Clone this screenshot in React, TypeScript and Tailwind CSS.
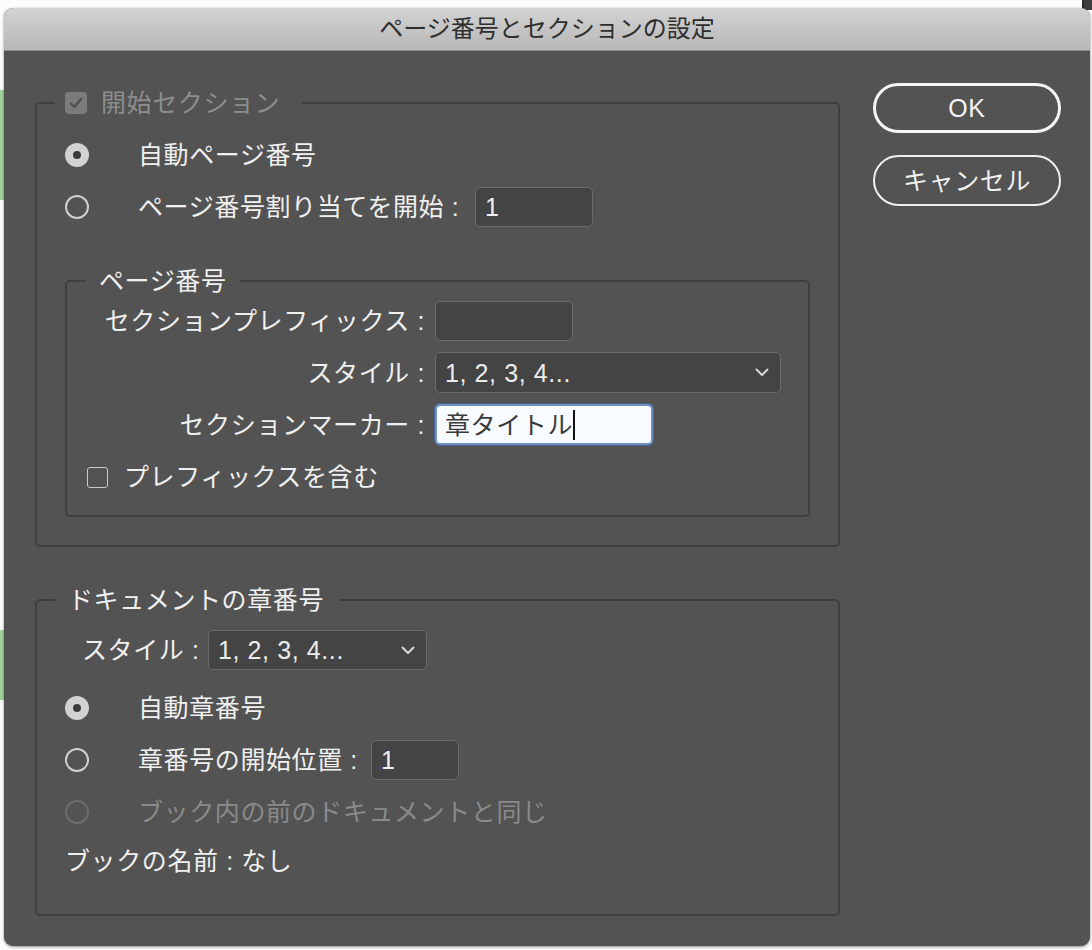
import React from "react";

const font = "font-['Liberation_Sans','Noto_Sans_CJK_JP',sans-serif]";

function Radio({ checked, disabled }: { checked?: boolean; disabled?: boolean }) {
	if (checked) {
		return (
			<span className="flex size-[24px] shrink-0 items-center justify-center rounded-full bg-[#d2d2d2]">
				<span className="size-[8px] rounded-full bg-[#3b3b3b]" />
			</span>
		);
	}
	return (
		<span
			className={
				disabled
					? "size-[24px] shrink-0 rounded-full border-2 border-[#6c6c6c]"
					: "size-[24px] shrink-0 rounded-full border-2 border-[#cfcfcf]"
			}
		/>
	);
}

function Chevron() {
	return (
		<svg width="14" height="9" viewBox="0 0 14 9" className="shrink-0">
			<polyline points="1.5,1.5 7,7 12.5,1.5" fill="none" stroke="#dcdcdc" strokeWidth="1.8" strokeLinecap="round" strokeLinejoin="round" />
		</svg>
	);
}

function Select({ className }: { className: string }) {
	return (
		<div className={"flex items-center justify-between rounded-[5px] border-[1.5px] border-[#6b6b6b] bg-[#444444] pl-[9px] pr-[11px] text-[#ececec] " + className}>
			<span>1, 2, 3, 4...</span>
			<Chevron />
		</div>
	);
}

export default function App() {
	return (
		<div className={"relative h-[950px] w-[1092px] overflow-hidden bg-[#fbfdfb] " + font}>
			{/* canvas behind the dialog */}
			<div className="absolute right-0 top-0 h-[10px] w-[10px] border-l-2 border-[#2a2a2a] bg-[#3d3d3d]" />
			<div className="absolute left-0 top-[90px] h-[110px] w-[4px] bg-[#9fd39a]" />
			<div className="absolute left-0 top-[630px] h-[70px] w-[4px] bg-[#9fd39a]" />

			<div className="relative ml-[4px] mt-[8px] flex h-[938px] w-[1086px] flex-col overflow-hidden rounded-[9px] bg-[#535353] shadow-[0_1px_3px_rgba(0,0,0,0.45)]">
				{/* title bar */}
				<div className="flex h-[43px] shrink-0 items-center justify-center border-b border-[#8f8f8f] bg-gradient-to-b from-[#d3d3d3] to-[#b7b7b7] text-[24px] text-[#2e2e2e]">
					ページ番号とセクションの設定
				</div>

				<div className="flex pl-[31px] pt-[32px] text-[25px] leading-[30px] tracking-[0.6px] text-[#f0f0f0]">
					{/* left column */}
					<div className="mt-[5px] flex w-[805px] flex-col gap-[38px]">
						<fieldset className="rounded-[5px] border-2 border-[#3f3f3f]">
							<legend className="ml-[18px] pl-[10px] pr-[22px]">
								<div className="flex h-[30px] items-center gap-[14px] text-[#8d8d8d]">
									<span className="flex size-[22px] items-center justify-center rounded-[4px] bg-[#7b7b7b]">
										<svg width="14" height="12" viewBox="0 0 14 12">
											<polyline points="2,6.5 5.5,10 12,2" fill="none" stroke="#4f4f4f" strokeWidth="2.4" strokeLinecap="round" strokeLinejoin="round" />
										</svg>
									</span>
									<span>開始セクション</span>
								</div>
							</legend>

							<div className="px-[28px] pb-[28px] pt-[17px]">
								<div className="flex h-[40px] items-center">
									<Radio checked />
									<span className="ml-[49px]">自動ページ番号</span>
								</div>
								<div className="mt-[12px] flex h-[40px] items-center">
									<Radio />
									<span className="ml-[49px] w-[327px] whitespace-nowrap">ページ番号割り当てを開始 :</span>
									<div className="ml-[10px] flex h-[40px] w-[118px] items-center rounded-[5px] border-[1.5px] border-[#6b6b6b] bg-[#444444] pl-[9px]">1</div>
								</div>

								<fieldset className="mt-[39px] rounded-[5px] border-2 border-[#3f3f3f]">
									<legend className="ml-[18px] pl-[14px] pr-[13px]">
										<div className="h-[30px]">ページ番号</div>
									</legend>
									<div className="pb-[18px] pt-[5px]">
										<div className="grid grid-cols-[358px_auto] items-center gap-x-[10px] gap-y-[11px]">
											<span className="justify-self-end whitespace-nowrap">セクションプレフィックス :</span>
											<div className="h-[40px] w-[138px] rounded-[5px] border-[1.5px] border-[#6b6b6b] bg-[#444444]" />

											<span className="justify-self-end whitespace-nowrap">スタイル :</span>
											<Select className="h-[41px] w-[346px]" />

											<span className="justify-self-end whitespace-nowrap">セクションマーカー :</span>
											<div className="flex h-[41px] w-[218px] items-center rounded-[5px] border-2 border-[#6f8fbf] bg-[#f8fbff] pl-[8px] text-[#3a3a3a] shadow-[0_0_0_1px_#4a6590]">
												<span>章タイトル</span>
												<span className="h-[30px] w-[2px] bg-[#111111]" />
											</div>
										</div>
										<div className="mt-[12px] flex h-[40px] items-center pl-[20px]">
											<span className="size-[21px] rounded-[3px] border-[1.5px] border-[#c9c9c9]" />
											<span className="ml-[16px]">プレフィックスを含む</span>
										</div>
									</div>
								</fieldset>
							</div>
						</fieldset>

						<fieldset className="rounded-[5px] border-2 border-[#3f3f3f]">
							<legend className="ml-[18px] pl-[13px] pr-[15px]">
								<div className="h-[30px]">ドキュメントの章番号</div>
							</legend>
							<div className="pb-[33px] pl-[28px] pt-[15px]">
								<div className="ml-[17px] flex h-[40px] items-center">
									<span className="w-[116px] whitespace-nowrap">スタイル :</span>
									<Select className="ml-[10px] h-[40px] w-[219px]" />
								</div>
								<div className="mt-[18px] flex h-[40px] items-center">
									<Radio checked />
									<span className="ml-[49px]">自動章番号</span>
								</div>
								<div className="mt-[12px] flex h-[40px] items-center">
									<Radio />
									<span className="ml-[49px] w-[223px] whitespace-nowrap">章番号の開始位置 :</span>
									<div className="ml-[10px] flex h-[40px] w-[88px] items-center rounded-[5px] border-[1.5px] border-[#6b6b6b] bg-[#444444] pl-[9px]">1</div>
								</div>
								<div className="mt-[12px] flex h-[40px] items-center text-[#8a8a8a]">
									<Radio disabled />
									<span className="ml-[49px]">ブック内の前のドキュメントと同じ</span>
								</div>
								<div className="mt-[9px] flex h-[40px] items-center">ブックの名前 : なし</div>
							</div>
						</fieldset>
					</div>

					{/* buttons */}
					<div className="ml-[33px] flex w-[188px] flex-col gap-[22px]">
						<button className="flex h-[50px] items-center justify-center rounded-full border-[3px] border-[#f4f4f4] text-[#f4f4f4]">OK</button>
						<button className="flex h-[51px] items-center justify-center rounded-full border-2 border-[#f0f0f0] text-[#f0f0f0]">キャンセル</button>
					</div>
				</div>
			</div>
		</div>
	);
}
